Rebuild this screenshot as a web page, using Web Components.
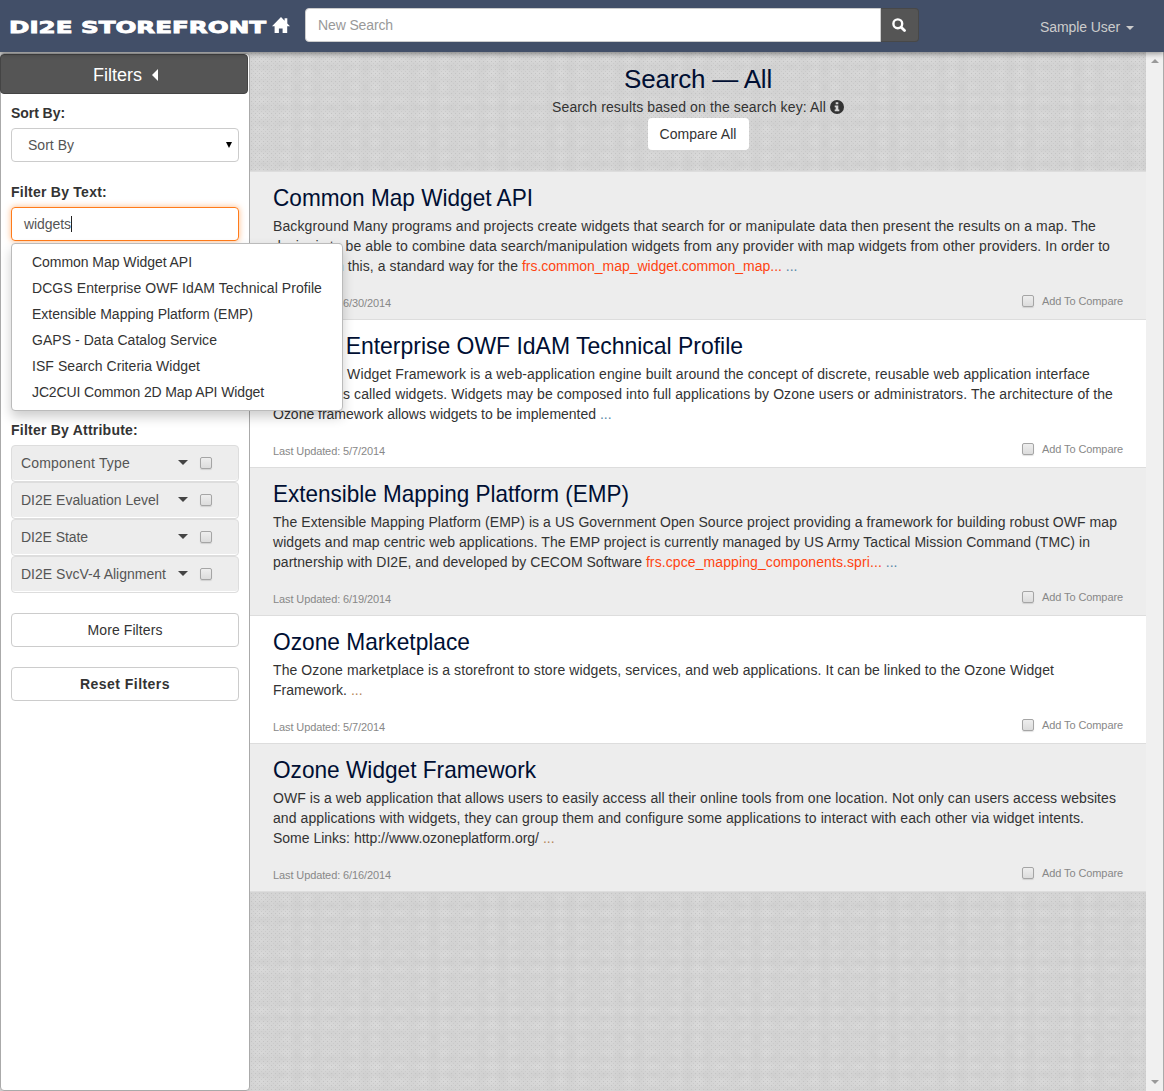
<!DOCTYPE html>
<html lang="en"><head><meta charset="utf-8"><title>DI2E Storefront</title>
<style>
html,body{margin:0;height:100%;overflow:hidden}
body{font:14px/20px "Liberation Sans",Arial,sans-serif;color:#333}
</style></head><body><store-app></store-app>
<script>
const define=(name,html,init)=>customElements.define(name,class extends HTMLElement{
  connectedCallback(){
    if(this.shadowRoot)return;
    const t=document.createElement('template');
    t.innerHTML='<style>*{box-sizing:border-box}</style>'+html;
    this.attachShadow({mode:'open'}).append(t.content.cloneNode(true));
    if(init)init.call(this,this.shadowRoot);
  }
});

/* Single line of text whose tracking (or horizontal scale) is tuned to a given advance width. */
define('fit-text','<style>:host{display:inline-block;white-space:nowrap}span{display:inline-block;white-space:nowrap}</style><span><slot></slot></span>',function(r){
  const s=r.querySelector('span'),w=+this.getAttribute('w');
  if(!w)return;
  if(this.hasAttribute('stretch')){
    const k=w/s.getBoundingClientRect().width;
    s.style.transformOrigin='0 50%';s.style.transform=`scaleX(${k})`;this.style.width=w+'px';
  }else{
    const n=this.textContent.length;
    s.style.letterSpacing=(w-s.getBoundingClientRect().width)/n+'px';
  }
});

define('check-box',`<style>:host{display:block;width:12px;height:12px;flex:none;border:1px solid #a5a5a5;border-radius:2px;background:linear-gradient(#eee,#dcdcdc);box-shadow:0 1px 1px rgba(0,0,0,.12);box-sizing:border-box}</style>`);

define('top-bar',`<style>
:host{display:flex;height:52px;background:#424f68;box-shadow:0 1px 6px rgba(0,0,0,.45);position:relative;z-index:2;padding:8px 30px 0 9px;box-sizing:border-box}
.logo{width:296px;height:34px;display:flex;color:#fff;align-items:center;padding-top:5px;gap:6px}
.logo fit-text{font:bold 15.4px/20px "DejaVu Sans";-webkit-text-stroke:.8px #fff;margin-top:1px}
.logo svg{margin-top:-4px}
.field{width:576px;height:34px;background:#fff;border:1px solid #ccc;border-radius:4px 0 0 4px;color:#999;padding:6px 12px}
.btn{width:38px;height:34px;background:#555;border:1px solid #484848;border-left:0;border-radius:0 4px 4px 0;display:flex;align-items:center;justify-content:center;padding-right:1px}
.user{margin-left:auto;color:#ccc;display:flex;gap:6px;padding-top:9px}
.user i{border:4px solid transparent;border-top-color:#ccc;border-bottom:0;height:0;margin-top:9px}
</style>
<div class="logo"><fit-text w="257" stretch>DI2E STOREFRONT</fit-text>
<svg width="18" height="17" viewBox="0 0 18 17" fill="#fff"><path d="M9 0 0 9.2h2.600V16h4.300v-4.600h3.700V16h4.600V9.200H18l-2.700-2.800V1.200h-2.700v2.500z"/></svg></div>
<div class="field"><fit-text w="75">New Search</fit-text></div>
<div class="btn"><svg width="14" height="14" viewBox="0 0 14 14" fill="none" stroke="#fff"><circle cx="5.8" cy="5.8" r="4.4" stroke-width="2.400"/><path d="m9.200 9.200 3.300 3.300" stroke-width="2.800" stroke-linecap="round"/></svg></div>
<div class="user"><fit-text w="80">Sample User</fit-text><i></i></div>`);

define('attribute-row',`<style>
:host{display:flex;align-items:center;height:37px;border:1px solid #ddd;border-radius:4px;background:#ededed;color:#555;padding:0 26px 2px 9px;box-shadow:inset 0 -1px #fff;box-sizing:border-box}
i{margin-left:auto;border:5px solid transparent;border-top-color:#444;border-bottom:0;margin-right:12px}
</style><slot></slot><i></i><check-box></check-box>`);

define('suggest-menu',`<style>
:host{display:block;position:absolute;z-index:5;left:11px;top:191px;width:332px;height:168px;background:#fff;border:1px solid #bbb;border-radius:4px;box-shadow:0 6px 12px rgba(0,0,0,.2);padding:5px 0;box-sizing:border-box}
::slotted(div){padding:3px 20px;height:26px;box-sizing:border-box}
</style><slot></slot>`);

define('filter-panel',`<style>
:host{display:block;position:relative;z-index:1;width:250px;flex:none;padding-top:1px;background:#cfcfcf}
.box{height:1038px;border:1px solid #aaa;border-radius:4px;background:#fff;padding:0 10px;display:flex;flex-direction:column}
.head{margin:0 0 0 -11px;width:248px;height:40px;flex:none;background:#555;border:1px solid #444;border-radius:4px;color:#fff;font-size:18px;display:flex;align-items:center;justify-content:center;gap:10px;padding:2px 0 0 3px}
.head i{border:6px solid transparent;border-right-color:#fff;border-left:0}
label{font-weight:bold;display:block;height:20px;flex:none}
.ctl{height:34px;flex:none;border:1px solid #ccc;border-radius:4px;padding:6px 12px;color:#555}
.sel{display:flex;justify-content:space-between;padding:6px 6px 6px 16px}
.sel svg{margin-top:6px}
.focus{border-color:#ff7b1a;box-shadow:0 0 6px rgba(255,123,26,.55);display:flex}
.focus b{width:1px;height:16px;background:#222;margin-top:2px}
.btn{color:#333;text-align:center}
</style>
<div class="box"><div class="head"><fit-text w="49">Filters</fit-text><i></i></div>
<label style="margin-top:9px"><fit-text w="54">Sort By:</fit-text></label>
<div class="ctl sel" style="margin-top:5px"><fit-text w="46">Sort By</fit-text><svg width="6" height="8"><path d="M0 1h6L3 7z"/></svg></div>
<label style="margin-top:20px"><fit-text w="96">Filter By Text:</fit-text></label>
<div class="ctl focus" style="margin-top:5px"><fit-text w="47">widgets</fit-text><b></b></div>
<div class="ctl" style="margin-top:50px"></div>
<label style="margin-top:95px"><fit-text w="127">Filter By Attribute:</fit-text></label>
<attribute-row style="margin-top:5px"><fit-text w="109">Component Type</fit-text></attribute-row>
<attribute-row><fit-text w="138">DI2E Evaluation Level</fit-text></attribute-row>
<attribute-row><fit-text w="67">DI2E State</fit-text></attribute-row>
<attribute-row><fit-text w="145">DI2E SvcV-4 Alignment</fit-text></attribute-row>
<div class="ctl btn" style="margin-top:20px"><fit-text w="75">More Filters</fit-text></div>
<div class="ctl btn" style="margin-top:20px"><b><fit-text w="90">Reset Filters</fit-text></b></div>
</div>
<suggest-menu>
<div><fit-text w="160">Common Map Widget API</fit-text></div>
<div><fit-text w="290">DCGS Enterprise OWF IdAM Technical Profile</fit-text></div>
<div><fit-text w="221">Extensible Mapping Platform (EMP)</fit-text></div>
<div><fit-text w="185">GAPS - Data Catalog Service</fit-text></div>
<div><fit-text w="168">ISF Search Criteria Widget</fit-text></div>
<div><fit-text w="232">JC2CUI Common 2D Map API Widget</fit-text></div>
</suggest-menu>`);

define('result-item',`<style>
:host{display:flex;flex-direction:column;height:148px;border-bottom:1px solid #ddd;background:#fff;padding:11px 23px 6px;box-sizing:border-box}
:host([alt]){background:#ededed}
:host([short]){height:128px}
.t{font-size:24px;line-height:30px;color:#000f33;height:33px}
.foot{margin-top:auto;display:flex;align-items:center;font-size:11px;color:#888;height:24px}
.foot ::slotted(*){padding-top:3px}
check-box{margin:0 8px 0 auto}
::slotted(p){margin:0;height:20px;white-space:nowrap}
</style><div class="t"><slot name="title"></slot></div><slot></slot>
<div class="foot"><slot name="date"></slot><check-box></check-box><fit-text w="81">Add To Compare</fit-text></div>`);

define('results-view',`<style>
:host{display:block;width:896px;flex:none;background-color:#d4d4d4;background-image:radial-gradient(circle at 1.5px 1.5px,#c3c3c3 0 .5px,transparent 1px),radial-gradient(circle at 1.5px 1.5px,#cacaca 0 .5px,transparent 1px),radial-gradient(ellipse,rgba(255,255,255,.14),transparent 70%),radial-gradient(ellipse,rgba(0,0,0,.025),transparent 70%);background-size:4px 4px,4px 4px,23px 14px,17px 19px;background-position:0 0,2px 2px,0 0,5px 7px}
.top{height:120px;border-bottom:1px solid #ddd;display:flex;flex-direction:column;align-items:center;padding-top:12px}
.h{font-size:26px;line-height:30px;color:#000f33}
.sub{display:flex;align-items:center;gap:4px;height:20px;margin-top:3px}
.cmp{height:32px;width:101px;text-align:center;background:#fff;border-radius:4px;padding-top:6px;margin-top:1px}
a{color:#ff4411}.b{color:#5789a8}.o{color:#b5875a}
</style>
<div class="top"><div class="h"><fit-text w="148">Search — All</fit-text></div>
<div class="sub"><fit-text w="274">Search results based on the search key: All</fit-text><svg width="14" height="14" viewBox="0 0 14 14"><circle cx="7" cy="7" r="7" fill="#333"/><path d="M5.700 2.300h2.600v2H5.700zM4.700 5.400h3.600v4h1v1.900H4.700V9.400h1V7.300h-1z" fill="#d3d3d3"/></svg></div>
<div class="cmp"><fit-text w="77">Compare All</fit-text></div></div>
<result-item alt><fit-text slot="title" stretch w="260">Common Map Widget API</fit-text>
<p><fit-text w="823">Background Many programs and projects create widgets that search for or manipulate data then present the results on a map. The</fit-text></p>
<p><fit-text w="837">desire is to be able to combine data search/manipulation widgets from any provider with map widgets from other providers. In order to</fit-text></p>
<p><fit-text w="245">accomplish this, a standard way for the</fit-text> <a><fit-text w="260">frs.common_map_widget.common_map...</fit-text></a> <span class="b">...</span></p>
<fit-text slot="date" w="118">Last Updated: 6/30/2014</fit-text></result-item>
<result-item><fit-text slot="title" stretch w="470">DCGS Enterprise OWF IdAM Technical Profile</fit-text>
<p><fit-text w="817">The Ozone Widget Framework is a web-application engine built around the concept of discrete, reusable web application interface</fit-text></p>
<p><fit-text w="840">components called widgets. Widgets may be composed into full applications by Ozone users or administrators. The architecture of the</fit-text></p>
<p><fit-text w="323">Ozone framework allows widgets to be implemented</fit-text> <span class="b">...</span></p>
<fit-text slot="date" w="112">Last Updated: 5/7/2014</fit-text></result-item>
<result-item alt><fit-text slot="title" stretch w="356">Extensible Mapping Platform (EMP)</fit-text>
<p><fit-text w="844">The Extensible Mapping Platform (EMP) is a US Government Open Source project providing a framework for building robust OWF map</fit-text></p>
<p><fit-text w="817">widgets and map centric web applications. The EMP project is currently managed by US Army Tactical Mission Command (TMC) in</fit-text></p>
<p><fit-text w="369">partnership with DI2E, and developed by CECOM Software</fit-text> <a><fit-text w="236">frs.cpce_mapping_components.spri...</fit-text></a> <span class="b">...</span></p>
<fit-text slot="date" w="118">Last Updated: 6/19/2014</fit-text></result-item>
<result-item short><fit-text slot="title" stretch w="197">Ozone Marketplace</fit-text>
<p><fit-text w="781">The Ozone marketplace is a storefront to store widgets, services, and web applications. It can be linked to the Ozone Widget</fit-text></p>
<p><fit-text w="74">Framework.</fit-text> <span class="o">...</span></p>
<fit-text slot="date" w="112">Last Updated: 5/7/2014</fit-text></result-item>
<result-item alt><fit-text slot="title" stretch w="263">Ozone Widget Framework</fit-text>
<p><fit-text w="843">OWF is a web application that allows users to easily access all their online tools from one location. Not only can users access websites</fit-text></p>
<p><fit-text w="811">and applications with widgets, they can group them and configure some applications to interact with each other via widget intents.</fit-text></p>
<p><fit-text w="266">Some Links: http://www.ozoneplatform.org/</fit-text> <span class="o">...</span></p>
<fit-text slot="date" w="118">Last Updated: 6/16/2014</fit-text></result-item>`);

define('scroll-rail',`<style>
:host{display:flex;flex-direction:column;justify-content:space-between;align-items:center;flex:1;background:#f0f0f0;border-right:1px solid #aaa;padding:7px 0 7px;box-sizing:border-box}
i{border:4px solid transparent;border-top-color:#999;border-bottom:0}
i:first-of-type{border-top:0;border-bottom:4px solid #999}
</style><i></i><i></i>`);

define('store-app',`<style>:host{display:block;height:1091px}.main{display:flex;height:1039px}</style>
<top-bar></top-bar><div class="main"><filter-panel></filter-panel><results-view></results-view><scroll-rail></scroll-rail></div>`);
</script></body></html>
